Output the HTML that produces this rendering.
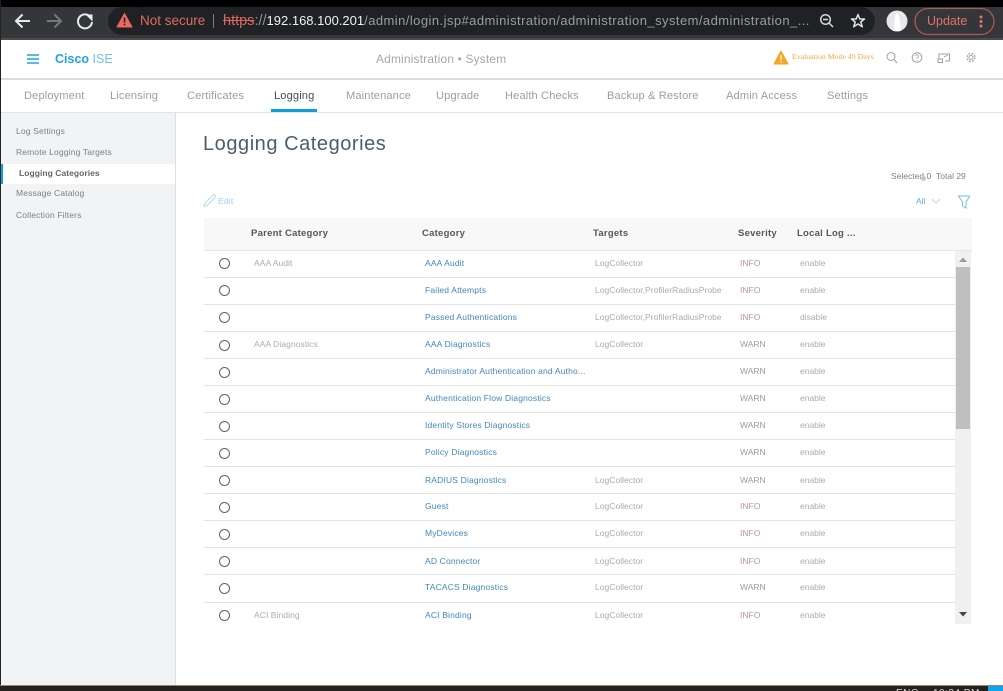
<!DOCTYPE html>
<html><head><meta charset="utf-8"><style>
html,body{margin:0;padding:0;background:#fff}
#p{position:relative;width:1003px;height:691px;overflow:hidden;background:#fff;font-family:"Liberation Sans",sans-serif;filter:blur(.35px)}
#p div,#p span.a{position:absolute;white-space:nowrap}
.t{line-height:14px;height:14px}
.nav{top:89px;font-size:11.1px;color:#9a9ea1;letter-spacing:.13px}
.side{left:16px;font-size:8.5px;color:#7c8083;letter-spacing:.15px}
.h{top:227px;font-size:9.5px;font-weight:bold;color:#54575a;letter-spacing:.25px}
.pc{left:254px;font-size:8.5px;color:#a8abad;letter-spacing:.07px}
.c{left:425px;font-size:8.5px;color:#3f88c0;letter-spacing:.17px}
.g{left:595px;font-size:8.5px;color:#a8abad;letter-spacing:.03px}
.s{left:740px;font-size:8.5px;color:#c4929a}
.w{left:740px;font-size:8.5px;color:#989b9e}
.l{left:800px;font-size:8.5px;color:#a8abad}
.r{left:219px;width:9px;height:9px;margin-top:-.5px;border:1.1px solid #606365;border-radius:50%}
.sep{left:204px;width:751px;height:1px;background:#e2e3e4}
</style></head><body><div id="p">
<div style="left:0;top:0;width:1003px;height:39px;background:#35363a"></div>
<div style="left:0;top:0;width:1003px;height:7px;background:#000"></div>
<div style="left:0;top:38px;width:1003px;height:2px;background:#4a4a4c"></div>
<div style="left:108px;top:7px;width:767px;height:28px;background:#202124;border-radius:14px"></div>
<svg style="position:absolute;left:0;top:0" width="1003" height="40" fill="none">
<path d="M30 21H17M22.500 14.500L16 21L22.500 27.500" stroke="#e8eaed" stroke-width="2"/>
<path d="M47 21H60M54.500 14.500L61 21L54.500 27.500" stroke="#77787b" stroke-width="2"/>
<path d="M90.500 17A7 7 0 1 0 92 22" stroke="#e8eaed" stroke-width="2"/>
<path d="M85.500 14.500H92.500V21.500Z" fill="#e8eaed"/>
<path d="M124.500 13.500L132 27H117Z" fill="#e8695e" stroke="#e8695e" stroke-linejoin="round"/>
<path d="M124.500 17.500V22.500M124.500 23.800V25.300" stroke="#202124" stroke-width="1.500"/>
<path d="M213.500 14V28" stroke="#7b7c7f"/>
<circle cx="825.500" cy="19.500" r="4.800" stroke="#d7d9dc" stroke-width="1.500"/>
<path d="M829 23L833 27M823 19.500H828" stroke="#d7d9dc" stroke-width="1.500"/>
<path d="M858 14.500L859.800 19H864.500L860.800 22L862.300 26.800L858 24L853.700 26.800L855.200 22L851.500 19H856.200Z" stroke="#e0e2e5" stroke-width="1.500" stroke-linejoin="round"/>
<circle cx="897" cy="21" r="10.500" fill="#e8e8e8"/>
<path d="M893 31C895 25 894 14 897 13C900 14 900 25 901 31Z" fill="#fff"/>
<rect x="915" y="8.500" width="79" height="26" rx="13" stroke="#a85a55" stroke-width="1.300"/>
<circle cx="981" cy="17" r="1.500" fill="#e8746a"/><circle cx="981" cy="21.500" r="1.500" fill="#e8746a"/><circle cx="981" cy="26" r="1.500" fill="#e8746a"/>
</svg>
<div class="t" style="left:140px;top:14px;font-size:13.500px;color:#df6a60">Not secure</div>
<div style="left:223px;top:12px;width:590px;overflow:hidden;font-size:13px;line-height:18px;color:#b8bbbf"><span style="color:#d8675f;text-decoration:line-through;font-size:14.500px">https</span><span style="color:#8e9094;font-size:14.500px">://</span><span style="color:#f0f1f3">192.168.100.201</span><span style="color:#9b9da1;letter-spacing:.44px">/admin/login.jsp#administration/administration_system/administration_...</span></div>
<div class="t" style="left:927px;top:14px;font-size:12.500px;color:#e0736a">Update</div>

<svg style="position:absolute;left:0;top:40px" width="1003" height="40" fill="none">
<path d="M27 15H39M27 19H39M27 23H39" stroke="#1fa5de" stroke-width="1.500"/>
<path d="M781 11L788 24H774Z" fill="#f5a623" stroke="#f5a623" stroke-linejoin="round"/>
<path d="M781 15V20M781 21V22.500" stroke="#fff" stroke-width="1.200"/>
<circle cx="891" cy="16.500" r="4" stroke="#9da1a3"/><path d="M894 19.500L897 23" stroke="#9da1a3"/>
<circle cx="917" cy="17.500" r="4.800" stroke="#9da1a3"/><path d="M915.500 16C916 14 919 14.500 918.500 16.500C918 17.500 917 17.500 917 19M917 20V21" stroke="#9da1a3" stroke-width=".8"/>
<path d="M939 19V14H949.500V21H945M938 19H942.500V22.500H938Z" stroke="#9da1a3"/><path d="M944 17L948 15" stroke="#9da1a3" stroke-width=".8"/>
<circle cx="971" cy="17.500" r="2" stroke="#9da1a3"/><circle cx="971" cy="17.500" r="4" stroke="#9da1a3" stroke-dasharray="2 1.200" stroke-width="1.200"/>
</svg>
<div class="t" style="left:55px;top:52px;font-size:12.500px;font-weight:bold;color:#1fa5de">Cisco <span style="font-weight:normal;color:#6dc2e8">ISE</span></div>
<div class="t" style="left:376px;top:52px;font-size:11.900px;color:#a3a6a9;letter-spacing:.2px">Administration • System</div>
<div class="t" style="left:792px;top:50px;font-size:7.800px;color:#f4a73a;font-family:'Liberation Serif',serif">Evaluation Mode 49 Days</div>
<div style="left:0;top:78px;width:1003px;height:2px;background:#dcdddd"></div>

<div class="t nav" style="left:24px">Deployment</div>
<div class="t nav" style="left:110px">Licensing</div>
<div class="t nav" style="left:187px">Certificates</div>
<div class="t nav" style="left:274px;color:#3f4e5c">Logging</div>
<div class="t nav" style="left:346px">Maintenance</div>
<div class="t nav" style="left:436px">Upgrade</div>
<div class="t nav" style="left:505px">Health Checks</div>
<div class="t nav" style="left:607px">Backup &amp; Restore</div>
<div class="t nav" style="left:726px">Admin Access</div>
<div class="t nav" style="left:827px">Settings</div>
<div style="left:271px;top:109px;width:46px;height:3px;background:#0b9fdc"></div>
<div style="left:0;top:112px;width:1003px;height:1px;background:#e2e3e4"></div>

<div style="left:1px;top:113px;width:174px;height:572px;background:#f2f3f4;border-right:1px solid #dddfe0"></div>
<div style="left:0;top:0;width:1px;height:691px;background:#222"></div>
<div style="left:1px;top:164px;width:174px;height:20px;background:#fff"></div>
<div style="left:1px;top:164px;width:2px;height:20px;background:#0b9fdc"></div>
<div class="t side" style="top:124px">Log Settings</div>
<div class="t side" style="top:145px">Remote Logging Targets</div>
<div class="t side" style="left:19px;top:166px;font-weight:bold;color:#626669;letter-spacing:.05px">Logging Categories</div>
<div class="t side" style="top:186px">Message Catalog</div>
<div class="t side" style="top:208px">Collection Filters</div>

<div style="left:203px;top:131px;font-size:20px;line-height:26px;color:#4c5e6d;letter-spacing:.55px">Logging Categories</div>
<div class="t" style="left:891px;top:169px;font-size:8.500px;color:#7d8184">Selected 0</div>
<div class="t" style="left:936px;top:169px;font-size:8.500px;color:#7d8184">Total 29</div>
<div style="left:921px;top:176px;width:5px;height:5px;border-radius:50%;background:#c4c6c8"></div>
<svg style="position:absolute;left:200px;top:190px" width="770" height="22" fill="none">
<path d="M4 16.500L5 13L13 5C15 4 16 6 15 7.500L7 15.500Z" stroke="#b5d9ee"/>
<path d="M732 9L736 13L740 9" stroke="#b5d9ee"/>
<path d="M758.500 6H770L766 12V18L762.500 16V12Z" stroke="#76bde3"/>
</svg>
<div class="t" style="left:218px;top:194px;font-size:8.500px;color:#a0cfe9;letter-spacing:.2px">Edit</div>
<div class="t" style="left:916px;top:194px;font-size:8.500px;color:#62ade0">All</div>

<div style="left:204px;top:218px;width:768px;height:32px;background:#f8f8f8;border-bottom:1px solid #e6e7e8"></div>
<div class="t h" style="left:251px">Parent Category</div>
<div class="t h" style="left:422px">Category</div>
<div class="t h" style="left:593px">Targets</div>
<div class="t h" style="left:738px">Severity</div>
<div class="t h" style="left:797px">Local Log ...</div>

<div style="left:955px;top:251px;width:16px;height:373px;background:#f0f0f0"></div>
<div style="left:956px;top:267px;width:14px;height:162px;background:#bfbfbf"></div>
<svg style="position:absolute;left:955px;top:251px" width="16" height="373"><path d="M4 11L8 6.500L12 11Z" fill="#9a9a9a"/><path d="M4 361H12L8 365.500Z" fill="#444"/></svg>

<div class="sep" style="top:277px"></div><div class="sep" style="top:304px"></div><div class="sep" style="top:331px"></div><div class="sep" style="top:358px"></div><div class="sep" style="top:385px"></div><div class="sep" style="top:412px"></div><div class="sep" style="top:439px"></div><div class="sep" style="top:466px"></div><div class="sep" style="top:493px"></div><div class="sep" style="top:520px"></div><div class="sep" style="top:547px"></div><div class="sep" style="top:574px"></div><div class="sep" style="top:602px"></div>

<div class="r" style="top:258.500px"></div><div class="t pc" style="top:256px">AAA Audit</div><div class="t c" style="top:256px">AAA Audit</div><div class="t g" style="top:256px">LogCollector</div><div class="t s" style="top:256px">INFO</div><div class="t l" style="top:256px">enable</div>
<div class="r" style="top:285.500px"></div><div class="t c" style="top:283px">Failed Attempts</div><div class="t g" style="top:283px">LogCollector,ProfilerRadiusProbe</div><div class="t s" style="top:283px">INFO</div><div class="t l" style="top:283px">enable</div>
<div class="r" style="top:312.500px"></div><div class="t c" style="top:310px">Passed Authentications</div><div class="t g" style="top:310px">LogCollector,ProfilerRadiusProbe</div><div class="t s" style="top:310px">INFO</div><div class="t l" style="top:310px">disable</div>
<div class="r" style="top:340px"></div><div class="t pc" style="top:337px">AAA Diagnostics</div><div class="t c" style="top:337px">AAA Diagnostics</div><div class="t g" style="top:337px">LogCollector</div><div class="t w" style="top:337px">WARN</div><div class="t l" style="top:337px">enable</div>
<div class="r" style="top:367px"></div><div class="t c" style="top:364px">Administrator Authentication and Autho...</div><div class="t w" style="top:364px">WARN</div><div class="t l" style="top:364px">enable</div>
<div class="r" style="top:394px"></div><div class="t c" style="top:391px">Authentication Flow Diagnostics</div><div class="t w" style="top:391px">WARN</div><div class="t l" style="top:391px">enable</div>
<div class="r" style="top:421px"></div><div class="t c" style="top:418px">Identity Stores Diagnostics</div><div class="t w" style="top:418px">WARN</div><div class="t l" style="top:418px">enable</div>
<div class="r" style="top:448px"></div><div class="t c" style="top:445px">Policy Diagnostics</div><div class="t w" style="top:445px">WARN</div><div class="t l" style="top:445px">enable</div>
<div class="r" style="top:475px"></div><div class="t c" style="top:473px">RADIUS Diagnostics</div><div class="t g" style="top:473px">LogCollector</div><div class="t w" style="top:473px">WARN</div><div class="t l" style="top:473px">enable</div>
<div class="r" style="top:502px"></div><div class="t c" style="top:499px">Guest</div><div class="t g" style="top:499px">LogCollector</div><div class="t s" style="top:499px">INFO</div><div class="t l" style="top:499px">enable</div>
<div class="r" style="top:529px"></div><div class="t c" style="top:526px">MyDevices</div><div class="t g" style="top:526px">LogCollector</div><div class="t s" style="top:526px">INFO</div><div class="t l" style="top:526px">enable</div>
<div class="r" style="top:556px"></div><div class="t c" style="top:554px">AD Connector</div><div class="t g" style="top:554px">LogCollector</div><div class="t s" style="top:554px">INFO</div><div class="t l" style="top:554px">enable</div>
<div class="r" style="top:583.500px"></div><div class="t c" style="top:580px">TACACS Diagnostics</div><div class="t g" style="top:580px">LogCollector</div><div class="t w" style="top:580px">WARN</div><div class="t l" style="top:580px">enable</div>
<div class="r" style="top:610.500px"></div><div class="t pc" style="top:608px">ACI Binding</div><div class="t c" style="top:608px">ACI Binding</div><div class="t g" style="top:608px">LogCollector</div><div class="t s" style="top:608px">INFO</div><div class="t l" style="top:608px">enable</div>

<div style="left:0;top:685px;width:1003px;height:6px;background:#25211f;border-top:1px solid #9a8470;box-sizing:border-box"></div>
<div style="left:896px;top:688px;font-size:10px;line-height:12px;color:#d8d8d8;letter-spacing:.5px">ENG</div>
<div style="left:933px;top:688px;font-size:10px;line-height:12px;color:#d8d8d8;letter-spacing:.5px">10:34 PM</div>
<div style="left:988px;top:686px;width:15px;height:5px;background:#0ea5ec"></div>
</div></body></html>
